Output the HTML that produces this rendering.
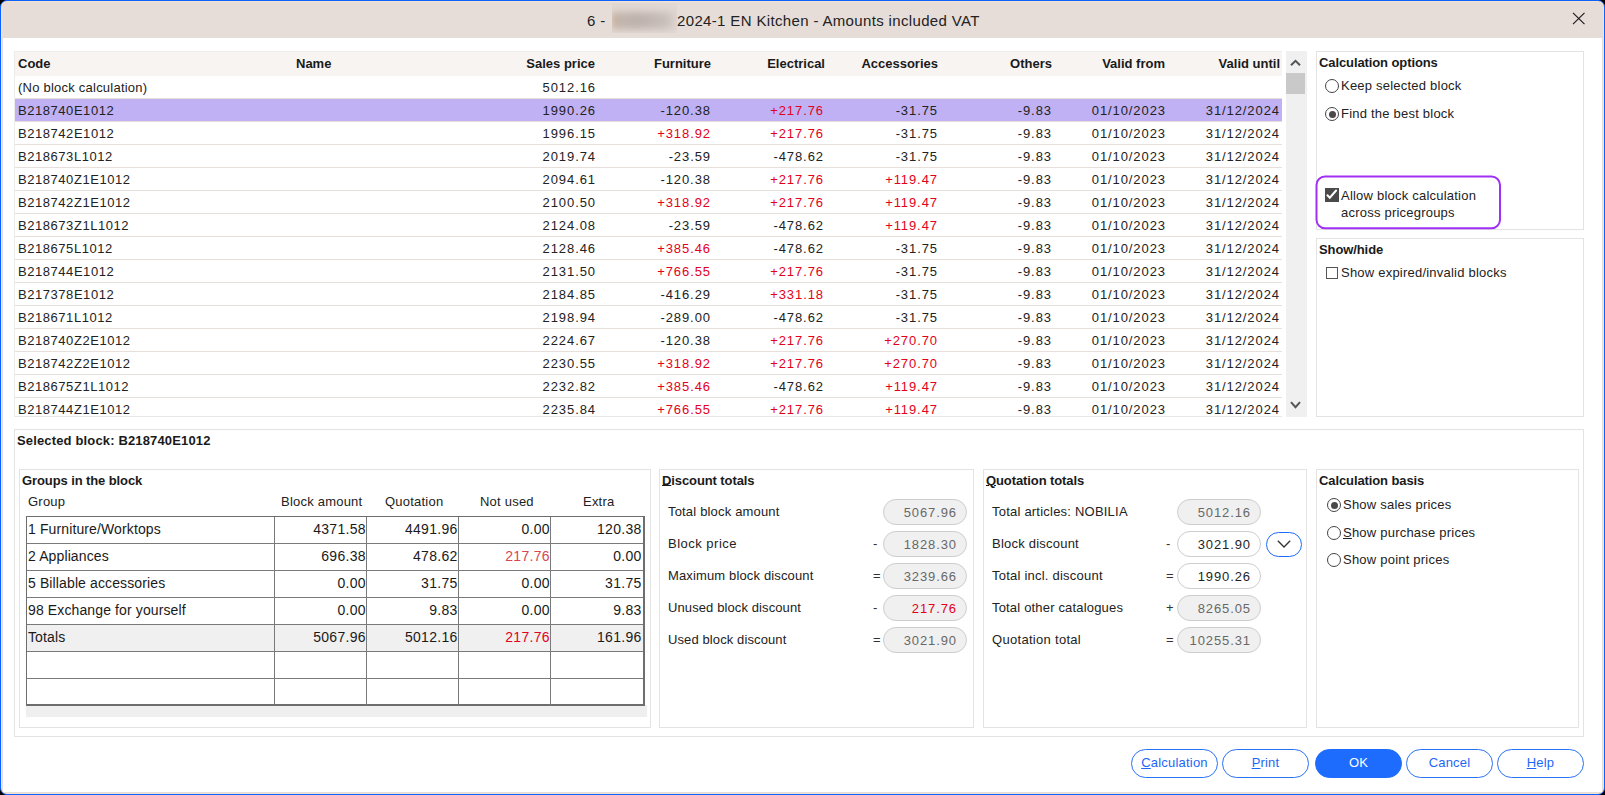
<!DOCTYPE html>
<html><head><meta charset="utf-8">
<style>
*{margin:0;padding:0;box-sizing:border-box}
html,body{width:1605px;height:795px;overflow:hidden;background:#000}
body{font-family:"Liberation Sans",sans-serif;color:#1f1f1f;position:relative}
.win{position:absolute;left:0;top:0;width:1605px;height:795px;border:1px solid #0b62fe;border-radius:7px;background:#e7ddd8;overflow:hidden;box-shadow:inset 0 0 0 1px #f2e3d3}
.content{position:absolute;left:2px;top:37px;width:1599px;height:755px;background:#fff}
.abs{position:absolute}
.title{position:absolute;left:0;top:0;width:1603px;height:37px}
.ttext{position:absolute;top:11px;font-size:15px;line-height:18px;color:#222;white-space:nowrap;letter-spacing:0.35px}
.blur{position:absolute;left:611px;top:2px;width:65px;height:30px;background:#e3d9d4;overflow:hidden}.blur i{position:absolute;left:0;top:9px;width:64px;height:17px;background:linear-gradient(to right,#c4ab92 0%,#c2b6ae 12%,#bdb1ac 40%,#c3b8b3 65%,#c9bfba 85%,#dcd2cd 100%);filter:blur(3.5px)}
/* main table */
.tbl{position:absolute;left:14px;top:51px;width:1268px;height:366px;overflow:hidden;border-left:1px solid #ececec;border-bottom:1px solid #e8e8e8;border-top:1px solid #eeeeee}
.thead{position:absolute;left:0;top:0;width:1267px;height:24px;background:#f8f4f2}
.thead span{position:absolute;top:-1px;line-height:25px;font-size:13px;font-weight:bold;color:#1a1a1a;white-space:nowrap}
.row{position:absolute;left:0;width:1267px;height:23px;border-bottom:1px solid #e9dfda}
.row.sel{background:#bfb1f4}
.row span{position:absolute;top:0;line-height:23px;font-size:13px;white-space:nowrap;color:#222}
.row span.red{color:#e3001b}
.sb{position:absolute;left:1286px;top:51px;width:21px;height:366px;background:#f0f0f0}
.thumb{position:absolute;left:0;top:22px;width:19px;height:21px;background:#c9c9c9}
/* panels */
.panel{position:absolute;border:1px solid #e3e3e3;background:#fff}
.ph{position:absolute;font-size:13px;font-weight:bold;color:#1a1a1a;white-space:nowrap;line-height:16px}
.lbl{position:absolute;font-size:13px;color:#222;white-space:nowrap;line-height:16px;letter-spacing:0.22px}
.radio{position:absolute;width:14px;height:14px;border:1px solid #444;border-radius:50%;background:#fff}
.radio.on::after{content:"";position:absolute;left:2.5px;top:2.5px;width:7px;height:7px;border-radius:50%;background:#4a4a4a}
.chk{position:absolute;width:13px;height:13px;border:1px solid #555;background:#fff}
.chk.on{background:#4a4a4a;border-color:#4a4a4a}
.purple{position:absolute;left:1316px;top:176px;width:184px;height:53px;border:2px solid #a535f2;border-radius:9px}
/* grid */
.grid{position:absolute;left:26px;top:516px;width:619px;height:190px;border:1px solid #6e6e6e;border-right-width:2px;border-bottom-width:2px;background:#fff}
.grow{position:absolute;left:0;width:616px;height:27px;border-bottom:1px solid #7a7a7a}
.grow.tot{background:#f0f0f0}
.gcell{position:absolute;top:-1px;line-height:26px;font-size:14px;color:#1a1a1a;white-space:nowrap;letter-spacing:0.3px}
.vline{position:absolute;top:0;width:1px;height:188px;background:#7a7a7a}
.pill{position:absolute;height:26px;border:1px solid #cdcdcd;border-radius:13px;background:#f0f0f0;color:#686868;font-size:13px;line-height:26px;text-align:right;padding-right:9px;letter-spacing:0.9px}
.pill.w{background:#fff;color:#1f1f1f}
.op{position:absolute;font-size:13px;color:#333;line-height:16px}
.btn{position:absolute;top:749px;width:87px;height:29px;border:1px solid #2a72f4;border-radius:15px;background:#fff;color:#1e66f8;font-size:13px;line-height:25px;text-align:center;letter-spacing:0.2px}
.btn.ok{background:#1e6cfd;color:#fff;border-color:#1e6cfd}
.u{text-decoration:underline;text-underline-offset:1px}.ph .u{text-underline-offset:0px}.ph{letter-spacing:-0.1px}
</style></head><body>
<div class="win">
 <div class="title">
  <div class="ttext" style="left:586px">6 -</div>
  <div class="blur"><i></i></div>
  <div class="ttext" style="left:676px">2024-1 EN Kitchen - Amounts included VAT</div>
  <svg class="abs" style="left:1571px;top:11px" width="14" height="13" viewBox="0 0 14 13"><path d="M1 0.8 L12.5 12.2 M12.5 0.8 L1 12.2" stroke="#1a1a1a" stroke-width="1.15" fill="none"/></svg>
 </div>
</div>
<div class="abs" style="left:3px;top:38px;width:1599px;height:754px;background:#fff"></div>

<!-- main table -->
<div class="tbl">
 <div class="thead"><span class="c" style="left:3px">Code</span><span class="c" style="left:281px">Name</span><span class="n" style="right:687px">Sales price</span><span class="n" style="right:571px">Furniture</span><span class="n" style="right:457px">Electrical</span><span class="n" style="right:344px">Accessories</span><span class="n" style="right:230px">Others</span><span class="n" style="right:117px">Valid from</span><span class="n" style="right:2px">Valid until</span></div>
 <div class="row" style="top:24px"><span class="c" style="left:3px;letter-spacing:0.23px">(No block calculation)</span><span class="n" style="right:686.1px;letter-spacing:0.9px">5012.16</span></div>
<div class="row sel" style="top:47px"><span class="c" style="left:3px;letter-spacing:0.55px">B218740E1012</span><span class="n" style="right:686.1px;letter-spacing:0.9px">1990.26</span><span class="n" style="right:571.1px;letter-spacing:0.9px">-120.38</span><span class="n red" style="right:458.1px;letter-spacing:0.9px">+217.76</span><span class="n" style="right:344.1px;letter-spacing:0.9px">-31.75</span><span class="n" style="right:230.1px;letter-spacing:0.9px">-9.83</span><span class="n" style="right:116.1px;letter-spacing:0.9px">01/10/2023</span><span class="n" style="right:2.1px;letter-spacing:0.9px">31/12/2024</span></div>
<div class="row" style="top:70px"><span class="c" style="left:3px;letter-spacing:0.55px">B218742E1012</span><span class="n" style="right:686.1px;letter-spacing:0.9px">1996.15</span><span class="n red" style="right:571.1px;letter-spacing:0.9px">+318.92</span><span class="n red" style="right:458.1px;letter-spacing:0.9px">+217.76</span><span class="n" style="right:344.1px;letter-spacing:0.9px">-31.75</span><span class="n" style="right:230.1px;letter-spacing:0.9px">-9.83</span><span class="n" style="right:116.1px;letter-spacing:0.9px">01/10/2023</span><span class="n" style="right:2.1px;letter-spacing:0.9px">31/12/2024</span></div>
<div class="row" style="top:93px"><span class="c" style="left:3px;letter-spacing:0.55px">B218673L1012</span><span class="n" style="right:686.1px;letter-spacing:0.9px">2019.74</span><span class="n" style="right:571.1px;letter-spacing:0.9px">-23.59</span><span class="n" style="right:458.1px;letter-spacing:0.9px">-478.62</span><span class="n" style="right:344.1px;letter-spacing:0.9px">-31.75</span><span class="n" style="right:230.1px;letter-spacing:0.9px">-9.83</span><span class="n" style="right:116.1px;letter-spacing:0.9px">01/10/2023</span><span class="n" style="right:2.1px;letter-spacing:0.9px">31/12/2024</span></div>
<div class="row" style="top:116px"><span class="c" style="left:3px;letter-spacing:0.55px">B218740Z1E1012</span><span class="n" style="right:686.1px;letter-spacing:0.9px">2094.61</span><span class="n" style="right:571.1px;letter-spacing:0.9px">-120.38</span><span class="n red" style="right:458.1px;letter-spacing:0.9px">+217.76</span><span class="n red" style="right:344.1px;letter-spacing:0.9px">+119.47</span><span class="n" style="right:230.1px;letter-spacing:0.9px">-9.83</span><span class="n" style="right:116.1px;letter-spacing:0.9px">01/10/2023</span><span class="n" style="right:2.1px;letter-spacing:0.9px">31/12/2024</span></div>
<div class="row" style="top:139px"><span class="c" style="left:3px;letter-spacing:0.55px">B218742Z1E1012</span><span class="n" style="right:686.1px;letter-spacing:0.9px">2100.50</span><span class="n red" style="right:571.1px;letter-spacing:0.9px">+318.92</span><span class="n red" style="right:458.1px;letter-spacing:0.9px">+217.76</span><span class="n red" style="right:344.1px;letter-spacing:0.9px">+119.47</span><span class="n" style="right:230.1px;letter-spacing:0.9px">-9.83</span><span class="n" style="right:116.1px;letter-spacing:0.9px">01/10/2023</span><span class="n" style="right:2.1px;letter-spacing:0.9px">31/12/2024</span></div>
<div class="row" style="top:162px"><span class="c" style="left:3px;letter-spacing:0.55px">B218673Z1L1012</span><span class="n" style="right:686.1px;letter-spacing:0.9px">2124.08</span><span class="n" style="right:571.1px;letter-spacing:0.9px">-23.59</span><span class="n" style="right:458.1px;letter-spacing:0.9px">-478.62</span><span class="n red" style="right:344.1px;letter-spacing:0.9px">+119.47</span><span class="n" style="right:230.1px;letter-spacing:0.9px">-9.83</span><span class="n" style="right:116.1px;letter-spacing:0.9px">01/10/2023</span><span class="n" style="right:2.1px;letter-spacing:0.9px">31/12/2024</span></div>
<div class="row" style="top:185px"><span class="c" style="left:3px;letter-spacing:0.55px">B218675L1012</span><span class="n" style="right:686.1px;letter-spacing:0.9px">2128.46</span><span class="n red" style="right:571.1px;letter-spacing:0.9px">+385.46</span><span class="n" style="right:458.1px;letter-spacing:0.9px">-478.62</span><span class="n" style="right:344.1px;letter-spacing:0.9px">-31.75</span><span class="n" style="right:230.1px;letter-spacing:0.9px">-9.83</span><span class="n" style="right:116.1px;letter-spacing:0.9px">01/10/2023</span><span class="n" style="right:2.1px;letter-spacing:0.9px">31/12/2024</span></div>
<div class="row" style="top:208px"><span class="c" style="left:3px;letter-spacing:0.55px">B218744E1012</span><span class="n" style="right:686.1px;letter-spacing:0.9px">2131.50</span><span class="n red" style="right:571.1px;letter-spacing:0.9px">+766.55</span><span class="n red" style="right:458.1px;letter-spacing:0.9px">+217.76</span><span class="n" style="right:344.1px;letter-spacing:0.9px">-31.75</span><span class="n" style="right:230.1px;letter-spacing:0.9px">-9.83</span><span class="n" style="right:116.1px;letter-spacing:0.9px">01/10/2023</span><span class="n" style="right:2.1px;letter-spacing:0.9px">31/12/2024</span></div>
<div class="row" style="top:231px"><span class="c" style="left:3px;letter-spacing:0.55px">B217378E1012</span><span class="n" style="right:686.1px;letter-spacing:0.9px">2184.85</span><span class="n" style="right:571.1px;letter-spacing:0.9px">-416.29</span><span class="n red" style="right:458.1px;letter-spacing:0.9px">+331.18</span><span class="n" style="right:344.1px;letter-spacing:0.9px">-31.75</span><span class="n" style="right:230.1px;letter-spacing:0.9px">-9.83</span><span class="n" style="right:116.1px;letter-spacing:0.9px">01/10/2023</span><span class="n" style="right:2.1px;letter-spacing:0.9px">31/12/2024</span></div>
<div class="row" style="top:254px"><span class="c" style="left:3px;letter-spacing:0.55px">B218671L1012</span><span class="n" style="right:686.1px;letter-spacing:0.9px">2198.94</span><span class="n" style="right:571.1px;letter-spacing:0.9px">-289.00</span><span class="n" style="right:458.1px;letter-spacing:0.9px">-478.62</span><span class="n" style="right:344.1px;letter-spacing:0.9px">-31.75</span><span class="n" style="right:230.1px;letter-spacing:0.9px">-9.83</span><span class="n" style="right:116.1px;letter-spacing:0.9px">01/10/2023</span><span class="n" style="right:2.1px;letter-spacing:0.9px">31/12/2024</span></div>
<div class="row" style="top:277px"><span class="c" style="left:3px;letter-spacing:0.55px">B218740Z2E1012</span><span class="n" style="right:686.1px;letter-spacing:0.9px">2224.67</span><span class="n" style="right:571.1px;letter-spacing:0.9px">-120.38</span><span class="n red" style="right:458.1px;letter-spacing:0.9px">+217.76</span><span class="n red" style="right:344.1px;letter-spacing:0.9px">+270.70</span><span class="n" style="right:230.1px;letter-spacing:0.9px">-9.83</span><span class="n" style="right:116.1px;letter-spacing:0.9px">01/10/2023</span><span class="n" style="right:2.1px;letter-spacing:0.9px">31/12/2024</span></div>
<div class="row" style="top:300px"><span class="c" style="left:3px;letter-spacing:0.55px">B218742Z2E1012</span><span class="n" style="right:686.1px;letter-spacing:0.9px">2230.55</span><span class="n red" style="right:571.1px;letter-spacing:0.9px">+318.92</span><span class="n red" style="right:458.1px;letter-spacing:0.9px">+217.76</span><span class="n red" style="right:344.1px;letter-spacing:0.9px">+270.70</span><span class="n" style="right:230.1px;letter-spacing:0.9px">-9.83</span><span class="n" style="right:116.1px;letter-spacing:0.9px">01/10/2023</span><span class="n" style="right:2.1px;letter-spacing:0.9px">31/12/2024</span></div>
<div class="row" style="top:323px"><span class="c" style="left:3px;letter-spacing:0.55px">B218675Z1L1012</span><span class="n" style="right:686.1px;letter-spacing:0.9px">2232.82</span><span class="n red" style="right:571.1px;letter-spacing:0.9px">+385.46</span><span class="n" style="right:458.1px;letter-spacing:0.9px">-478.62</span><span class="n red" style="right:344.1px;letter-spacing:0.9px">+119.47</span><span class="n" style="right:230.1px;letter-spacing:0.9px">-9.83</span><span class="n" style="right:116.1px;letter-spacing:0.9px">01/10/2023</span><span class="n" style="right:2.1px;letter-spacing:0.9px">31/12/2024</span></div>
<div class="row" style="top:346px"><span class="c" style="left:3px;letter-spacing:0.55px">B218744Z1E1012</span><span class="n" style="right:686.1px;letter-spacing:0.9px">2235.84</span><span class="n red" style="right:571.1px;letter-spacing:0.9px">+766.55</span><span class="n red" style="right:458.1px;letter-spacing:0.9px">+217.76</span><span class="n red" style="right:344.1px;letter-spacing:0.9px">+119.47</span><span class="n" style="right:230.1px;letter-spacing:0.9px">-9.83</span><span class="n" style="right:116.1px;letter-spacing:0.9px">01/10/2023</span><span class="n" style="right:2.1px;letter-spacing:0.9px">31/12/2024</span></div>
</div>
<div class="sb">
 <svg class="abs" style="left:4px;top:8px" width="12" height="8" viewBox="0 0 12 8"><path d="M1 6.3 L5.5 1.8 L10 6.3" stroke="#555" stroke-width="2" fill="none"/></svg>
 <div class="thumb"></div>
 <svg class="abs" style="left:4px;top:350px" width="12" height="8" viewBox="0 0 12 8"><path d="M1 1.2 L5.5 6.2 L10 1.2" stroke="#555" stroke-width="2" fill="none"/></svg>
</div>

<!-- calc options -->
<div class="panel" style="left:1316px;top:51px;width:268px;height:179px"></div>
<div class="ph" style="left:1319px;top:55px">Calculation options</div>
<div class="radio" style="left:1325px;top:79px"></div>
<div class="lbl" style="left:1341px;top:78px">Keep selected block</div>
<div class="radio on" style="left:1325px;top:107px"></div>
<div class="lbl" style="left:1341px;top:106px">Find the best block</div>
<svg class="abs" style="left:1314px;top:174px" width="190" height="58" viewBox="0 0 190 58"><rect x="2.5" y="2.5" width="183.5" height="51.8" rx="8.5" ry="8.5" fill="none" stroke="#a030f6" stroke-width="2"/></svg>
<div class="chk on" style="left:1325px;top:188px;width:14px;height:14px;border:none"><svg class="abs" style="left:0;top:0" width="14" height="14" viewBox="0 0 14 14"><path d="M2.4 7.2 L4.8 9.7 L11.1 2.5" stroke="#fff" stroke-width="2" fill="none" stroke-linecap="round"/></svg></div>
<div class="lbl" style="left:1341px;top:188px">Allow block calculation</div>
<div class="lbl" style="left:1341px;top:205px">across pricegroups</div>

<div class="panel" style="left:1316px;top:238px;width:268px;height:179px"></div>
<div class="ph" style="left:1319px;top:242px">Show/hide</div>
<div class="chk" style="left:1326px;top:267px;width:12px;height:12px"></div>
<div class="lbl" style="left:1341px;top:265px">Show expired/invalid blocks</div>

<!-- selected block panel -->
<div class="panel" style="left:14px;top:429px;width:1570px;height:308px"></div>
<div class="ph" style="left:17px;top:433px;letter-spacing:0.15px">Selected block: B218740E1012</div>

<!-- groups panel -->
<div class="panel" style="left:19px;top:469px;width:632px;height:259px"></div>
<div class="ph" style="left:22px;top:473px">Groups in the block</div>
<div class="lbl" style="left:28px;top:494px">Group</div>
<div class="lbl" style="left:281px;top:494px">Block amount</div>
<div class="lbl" style="left:385px;top:494px">Quotation</div>
<div class="lbl" style="left:480px;top:494px">Not used</div>
<div class="lbl" style="left:583px;top:494px">Extra</div>
<div class="abs" style="left:26px;top:705px;width:621px;height:12px;background:#efefef"></div>
<div class="grid">
<div class="grow" style="top:0px"><span class="gcell" style="left:1px;letter-spacing:0.12px">1 Furniture/Worktops</span><span class="gcell" style="right:277.09999999999997px;">4371.58</span><span class="gcell" style="right:185.39999999999998px;">4491.96</span><span class="gcell" style="right:93.09999999999998px;">0.00</span><span class="gcell" style="right:1.4000000000000454px;">120.38</span></div><div class="grow" style="top:27px"><span class="gcell" style="left:1px;letter-spacing:0.12px">2 Appliances</span><span class="gcell" style="right:277.09999999999997px;">696.38</span><span class="gcell" style="right:185.39999999999998px;">478.62</span><span class="gcell" style="right:93.09999999999998px;color:#d6474f;">217.76</span><span class="gcell" style="right:1.4000000000000454px;">0.00</span></div><div class="grow" style="top:54px"><span class="gcell" style="left:1px;letter-spacing:0.12px">5 Billable accessories</span><span class="gcell" style="right:277.09999999999997px;">0.00</span><span class="gcell" style="right:185.39999999999998px;">31.75</span><span class="gcell" style="right:93.09999999999998px;">0.00</span><span class="gcell" style="right:1.4000000000000454px;">31.75</span></div><div class="grow" style="top:81px"><span class="gcell" style="left:1px;letter-spacing:0.12px">98 Exchange for yourself</span><span class="gcell" style="right:277.09999999999997px;">0.00</span><span class="gcell" style="right:185.39999999999998px;">9.83</span><span class="gcell" style="right:93.09999999999998px;">0.00</span><span class="gcell" style="right:1.4000000000000454px;">9.83</span></div><div class="grow tot" style="top:108px"><span class="gcell" style="left:1px;letter-spacing:0.12px">Totals</span><span class="gcell" style="right:277.09999999999997px;">5067.96</span><span class="gcell" style="right:185.39999999999998px;">5012.16</span><span class="gcell" style="right:93.09999999999998px;color:#e3001b;">217.76</span><span class="gcell" style="right:1.4000000000000454px;">161.96</span></div><div class="grow" style="top:135px"></div><div class="grow" style="border-bottom:none;top:162px"></div><div class="vline" style="left:247px"></div><div class="vline" style="left:339px"></div><div class="vline" style="left:431px"></div><div class="vline" style="left:523px"></div>
</div>

<!-- discount totals -->
<div class="panel" style="left:659px;top:469px;width:315px;height:259px"></div>
<div class="ph" style="left:662px;top:473px"><span class="u">D</span>iscount totals</div>
<div class="lbl" style="left:668px;top:504px;letter-spacing:0.176px">Total block amount</div><div class="pill" style="left:883px;top:499px;width:84px;">5067.96</div><div class="lbl" style="left:668px;top:536px;letter-spacing:0.49px">Block price</div><div class="op" style="left:873px;top:536px">-</div><div class="pill" style="left:883px;top:531px;width:84px;">1828.30</div><div class="lbl" style="left:668px;top:568px;letter-spacing:0.143px">Maximum block discount</div><div class="op" style="left:873px;top:568px">=</div><div class="pill" style="left:883px;top:563px;width:84px;">3239.66</div><div class="lbl" style="left:668px;top:600px;letter-spacing:0.105px">Unused block discount</div><div class="op" style="left:873px;top:600px">-</div><div class="pill" style="left:883px;top:595px;width:84px;color:#e3001b;">217.76</div><div class="lbl" style="left:668px;top:632px;letter-spacing:0.106px">Used block discount</div><div class="op" style="left:873px;top:632px">=</div><div class="pill" style="left:883px;top:627px;width:84px;">3021.90</div>

<!-- quotation totals -->
<div class="panel" style="left:983px;top:469px;width:324px;height:259px"></div>
<div class="ph" style="left:986px;top:473px"><span class="u">Q</span>uotation totals</div>
<div class="lbl" style="left:992px;top:504px;letter-spacing:0.218px">Total articles: NOBILIA</div><div class="pill" style="left:1177px;top:499px;width:84px">5012.16</div><div class="lbl" style="left:992px;top:536px;letter-spacing:0.223px">Block discount</div><div class="op" style="left:1166px;top:536px">-</div><div class="pill w" style="left:1177px;top:531px;width:84px">3021.90</div><div class="lbl" style="left:992px;top:568px;letter-spacing:0.226px">Total incl. discount</div><div class="op" style="left:1166px;top:568px">=</div><div class="pill w" style="left:1177px;top:563px;width:84px">1990.26</div><div class="lbl" style="left:992px;top:600px;letter-spacing:0.176px">Total other catalogues</div><div class="op" style="left:1166px;top:600px">+</div><div class="pill" style="left:1177px;top:595px;width:84px">8265.05</div><div class="lbl" style="left:992px;top:632px;letter-spacing:0.3px">Quotation total</div><div class="op" style="left:1166px;top:632px">=</div><div class="pill" style="left:1177px;top:627px;width:84px">10255.31</div>
<div class="abs" style="left:1266px;top:532px;width:36px;height:25px;border:1px solid #1f6bfb;border-radius:13px;background:#fff">
 <svg class="abs" style="left:10px;top:7px" width="15" height="9" viewBox="0 0 15 9"><path d="M0.8 0.8 L7 7 L13.2 0.8" stroke="#333" stroke-width="1.35" fill="none"/></svg>
</div>

<!-- calc basis -->
<div class="panel" style="left:1316px;top:469px;width:263px;height:259px"></div>
<div class="ph" style="left:1319px;top:473px">Calculation basis</div>
<div class="radio on" style="left:1327px;top:498px"></div>
<div class="lbl" style="left:1343px;top:497px">Show sales prices</div>
<div class="radio" style="left:1327px;top:526px"></div>
<div class="lbl" style="left:1343px;top:525px"><span class="u">S</span>how purchase prices</div>
<div class="radio" style="left:1327px;top:553px"></div>
<div class="lbl" style="left:1343px;top:552px">Show point prices</div>

<!-- buttons -->
<div class="btn" style="left:1131px"><span class="u">C</span>alculation</div>
<div class="btn" style="left:1222px"><span class="u">P</span>rint</div>
<div class="btn ok" style="left:1315px">OK</div>
<div class="btn" style="left:1406px">Cancel</div>
<div class="btn" style="left:1497px"><span class="u">H</span>elp</div>
</body></html>
